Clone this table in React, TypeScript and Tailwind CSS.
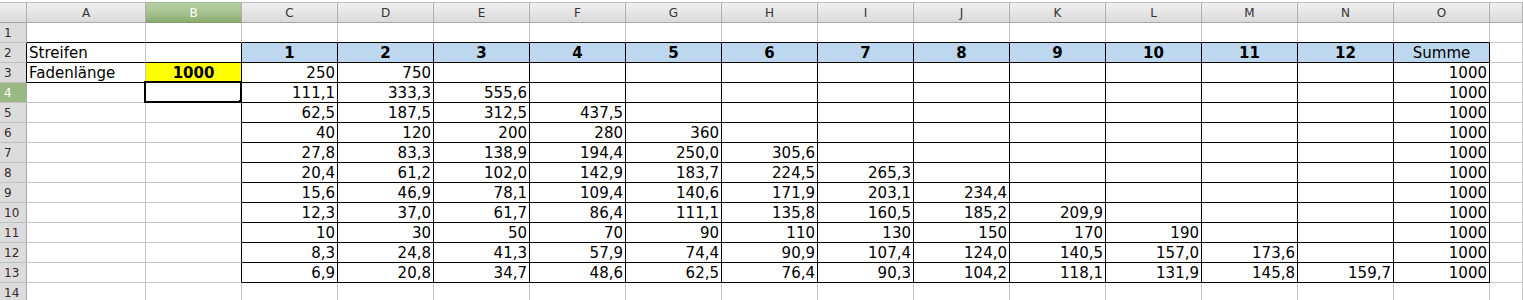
import React from 'react';

const letters = ['A', 'B', 'C', 'D', 'E', 'F', 'G', 'H', 'I', 'J', 'K', 'L', 'M', 'N', 'O', ''];

// values for C..N, row 3 to 13
const data: string[][] = [
  ['250', '750'],
  ['111,1', '333,3', '555,6'],
  ['62,5', '187,5', '312,5', '437,5'],
  ['40', '120', '200', '280', '360'],
  ['27,8', '83,3', '138,9', '194,4', '250,0', '305,6'],
  ['20,4', '61,2', '102,0', '142,9', '183,7', '224,5', '265,3'],
  ['15,6', '46,9', '78,1', '109,4', '140,6', '171,9', '203,1', '234,4'],
  ['12,3', '37,0', '61,7', '86,4', '111,1', '135,8', '160,5', '185,2', '209,9'],
  ['10', '30', '50', '70', '90', '110', '130', '150', '170', '190'],
  ['8,3', '24,8', '41,3', '57,9', '74,4', '90,9', '107,4', '124,0', '140,5', '157,0', '173,6'],
  ['6,9', '20,8', '34,7', '48,6', '62,5', '76,4', '90,3', '104,2', '118,1', '131,9', '145,8', '159,7'],
];

const inTable = (r: number, c: number) => r >= 2 && r <= 13 && c >= 2 && c <= 14;

function rightBlack(r: number, c: number) {
  if (c === 1 && r >= 2 && r <= 13) return true;
  if (inTable(r, c)) return true;
  return false;
}

function bottomBlack(r: number, c: number) {
  if (r === 1 && c <= 14) return true;
  if (inTable(r, c)) return true;
  if (r >= 2 && r <= 3 && c <= 1) return true;
  return false;
}

type CellProps = { r: number; c: number };

const Cell: React.FC<CellProps> = ({ r, c }) => {
  const rb = rightBlack(r, c) ? 'border-r-black' : 'border-r-[#c6c6c6]';
  const bb = bottomBlack(r, c) ? 'border-b-black' : 'border-b-[#c6c6c6]';
  let bg = 'bg-white';
  let text: string | null = null;
  let align = 'justify-end pr-[2px]';
  let weight = '';

  if (r === 2 && c >= 2 && c <= 13) {
    bg = 'bg-[#bdd7ee]';
    text = String(c - 1);
    align = 'justify-center';
    weight = 'font-bold';
  } else if (r === 2 && c === 14) {
    bg = 'bg-[#bdd7ee]';
    text = 'Summe';
    align = 'justify-center';
  } else if (r === 2 && c === 0) {
    text = 'Streifen';
    align = 'justify-start pl-[2px]';
  } else if (r === 3 && c === 0) {
    text = 'Fadenlänge';
    align = 'justify-start pl-[2px]';
  } else if (r === 3 && c === 1) {
    bg = 'bg-[#ffff00]';
    text = '1000';
    align = 'justify-center';
    weight = 'font-bold';
  } else if (r >= 3 && r <= 13 && c === 14) {
    text = '1000';
  } else if (r >= 3 && r <= 13 && c >= 2 && c <= 13) {
    text = data[r - 3][c - 2] ?? null;
  }

  return (
    <div className={`relative flex items-end border-r border-b ${rb} ${bb} ${bg} ${align} ${weight} h-[20px] text-[15px] leading-[18px] text-black`}>
      {text}
      {r === 4 && c === 1 && (
        <>
          <div className="absolute left-[-2px] top-[-2px] right-[-1px] bottom-[-1px] border-2 border-black" />
          <div className="absolute right-[-3px] bottom-[-3px] h-[5px] w-[5px] bg-black" />
        </>
      )}
    </div>
  );
};

const App: React.FC = () => {
  const rows = Array.from({ length: 14 }, (_, i) => i + 1);
  return (
    <div className="h-[300px] w-[1523px] overflow-hidden bg-white font-['DejaVu_Sans',sans-serif]">
      <div className="grid grid-cols-[27px_119px_repeat(14,96px)_1fr]">
        {/* column header */}
        <div className="mt-[2px] h-[21px] border-t border-r border-b border-t-[#bdbdbd] border-r-[#b0b0b0] border-b-[#a8a8a8] bg-gradient-to-b from-[#f0f0f0] to-[#dadada]" />
        {letters.map((l, i) =>
          i === 1 ? (
            <div
              key={i}
              className="mt-[2px] flex h-[21px] items-center justify-center border-t border-r border-b border-t-[#9fb98a] border-r-[#b0b0b0] border-b-[#7f9a68] bg-gradient-to-b from-[#b9d0a6] via-[#a6c190] to-[#8bab71] text-[12px] text-white"
            >
              {l}
            </div>
          ) : (
            <div
              key={i}
              className="mt-[2px] flex h-[21px] items-center justify-center border-t border-r border-b border-t-[#bdbdbd] border-r-[#b0b0b0] border-b-[#a8a8a8] bg-gradient-to-b from-[#f0f0f0] to-[#dadada] text-[12px] text-[#333333]"
            >
              {l}
            </div>
          )
        )}

        {rows.map((r) => (
          <React.Fragment key={r}>
            <div
              className={`flex h-[20px] items-center border-r border-b pl-[4px] text-[12px] ${
                r >= 2 && r <= 3 ? 'border-r-black' : 'border-r-[#a8a8a8]'
              } ${
                r === 4
                  ? 'border-b-[#c0c0c0] bg-[#9ab884] text-white'
                  : 'border-b-[#c0c0c0] bg-[#dcdcdc] text-[#3a2a2a]'
              }`}
            >
              {r}
            </div>
            {letters.map((_, c) => (
              <Cell key={c} r={r} c={c} />
            ))}
          </React.Fragment>
        ))}
      </div>
    </div>
  );
};

export default App;
